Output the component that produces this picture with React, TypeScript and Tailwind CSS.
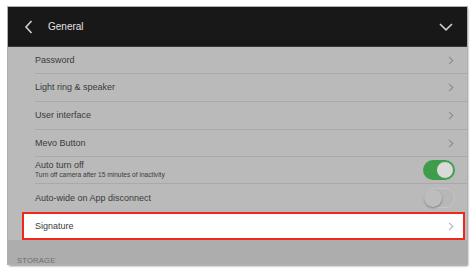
import React from "react";

const font = { fontFamily: '"Liberation Sans", Arial, sans-serif' };

function Chevron() {
  return (
    <svg width="6" height="9" viewBox="0 0 6 9" className="shrink-0">
      <path d="M1 0.8 L4.8 4.5 L1 8.2" fill="none" stroke="#8c8c8c" strokeWidth="1.1" />
    </svg>
  );
}

function Toggle({ on }: { on: boolean }) {
  return on ? (
    <div className="w-[32px] h-[20px] rounded-full bg-[#3e9d4b] relative shrink-0">
      <div className="absolute right-[1px] top-[1px] w-[18px] h-[18px] rounded-full bg-[#dadada] border border-[#3e9d4b]" />
    </div>
  ) : (
    <div className="w-[32px] h-[20px] rounded-full bg-[#b7b7b7] border border-[#c6c6c6] relative shrink-0">
      <div className="absolute left-0 top-0 w-[18px] h-[18px] rounded-full bg-[#bdbdbd] shadow-[0_1px_2px_rgba(0,0,0,0.35)]" />
    </div>
  );
}

function Row({ label, h, children, sep = true }: { label: React.ReactNode; h: string; children: React.ReactNode; sep?: boolean }) {
  return (
    <div className={`${h} pl-[27px] flex`}>
      <div className={`flex-1 flex items-center justify-between pr-[13px] ${sep ? "border-b border-[#a9a9a9]" : ""}`}>
        <div className="text-[9px] text-[#3a3a3a] leading-none">{label}</div>
        {children}
      </div>
    </div>
  );
}

export default function App() {
  return (
    <div className="w-[476px] h-[274px] bg-white pt-[7px] pl-[8px]" style={font}>
      <div className="w-[459px] h-[257px] overflow-hidden flex flex-col shadow-[1px_2px_2px_rgba(0,0,0,0.45)] outline outline-1 outline-[#b0b0b0]">
        <div className="h-[40px] bg-[#181818] flex items-center border-b border-[#3a3a3a] shrink-0">
          <svg width="10" height="14" viewBox="0 0 10 14" className="ml-[16px]">
            <path d="M7.5 1 L2 7 L7.5 13" fill="none" stroke="#d0d0d0" strokeWidth="1.6" />
          </svg>
          <div className="ml-[14px] text-[10px] text-[#e2e2e2]">General</div>
          <div className="flex-1" />
          <svg width="14" height="8" viewBox="0 0 14 8" className="mr-[14px]">
            <path d="M1 1 L7 6.8 L13 1" fill="none" stroke="#cfcfcf" strokeWidth="1.6" />
          </svg>
        </div>
        <div className="bg-[#bababa] flex flex-col">
          <Row label="Password" h="h-[27px]"><Chevron /></Row>
          <Row label="Light ring & speaker" h="h-[28px]"><Chevron /></Row>
          <Row label="User interface" h="h-[28px]"><Chevron /></Row>
          <Row label="Mevo Button" h="h-[27px]"><Chevron /></Row>
          <div className="h-[27px] pl-[27px] flex">
            <div className="flex-1 flex items-center justify-between pr-[12px] border-b border-[#a9a9a9]">
              <div className="flex flex-col gap-[2px] leading-none">
                <div className="text-[9px] text-[#3a3a3a]">Auto turn off</div>
                <div className="text-[6.6px] text-[#3a3a3a]">Turn off camera after 15 minutes of inactivity</div>
              </div>
              <Toggle on />
            </div>
          </div>
          <Row label="Auto-wide on App disconnect" h="h-[28px]" sep={false}>
            <div className="-mr-[1px]"><Toggle on={false} /></div>
          </Row>
          <div className="h-[28px] pl-[14px] pr-[2px] flex">
            <div className="flex-1 bg-white border-2 border-[#f0281c] flex items-center justify-between pl-[11px] pr-[9px]">
              <div className="text-[9px] text-[#3a3a3a] leading-none">Signature</div>
              <svg width="6" height="9" viewBox="0 0 6 9">
                <path d="M1 0.8 L4.8 4.5 L1 8.2" fill="none" stroke="#b5b5b5" strokeWidth="1.1" />
              </svg>
            </div>
          </div>
        </div>
        <div className="flex-1 bg-[#adadad] pl-[9px] flex items-end">
          <div className="text-[7.6px] text-[#6e6e6e] tracking-[0.2px] leading-none -mb-[1px]">STORAGE</div>
        </div>
      </div>
    </div>
  );
}
